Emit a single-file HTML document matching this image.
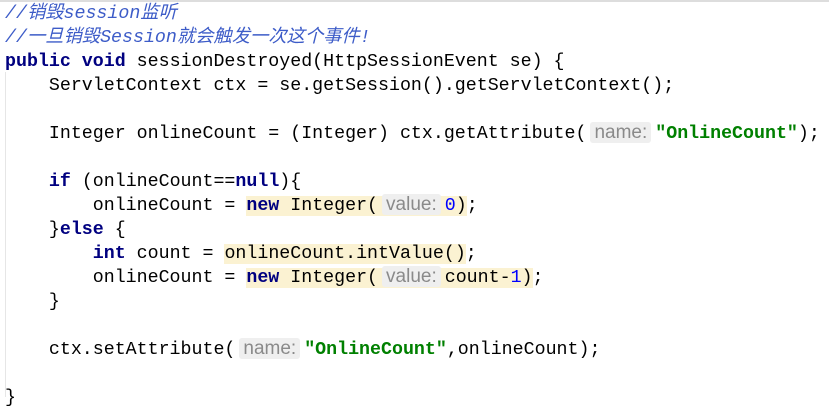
<html><head><style>
body{margin:0;width:829px;height:413px;background:#fff;overflow:hidden;position:relative}
.top{position:absolute;left:0;top:0;width:829px;height:2px;background:#ddd}
.guide{position:absolute;left:5px;top:72px;width:1px;height:325px;background:#e6e6e6}
pre{margin:0;position:absolute;left:5px;top:2px;font:18.3px/24px "Liberation Mono","Noto Sans CJK SC",monospace;color:#000;letter-spacing:0}
.k{color:#000080;font-weight:bold}
.c{color:#3d5cc8;font-style:italic}
.s{color:#008000;font-weight:bold}
.n{color:#0000ff}
.h{display:inline-block;background:#efefef;color:#8a8a8a;font:19px/21px "Liberation Sans",sans-serif;border-radius:3px;padding:0 4px;margin:0 4px;vertical-align:0}
.y{background:#fbf2d2}
</style></head><body>
<div class="top"></div><div class="guide"></div>
<pre><span class="c">//销毁session监听</span>
<span class="c">//一旦销毁Session就会触发一次这个事件!</span>
<span class="k">public void</span> sessionDestroyed(HttpSessionEvent se) {
    ServletContext ctx = se.getSession().getServletContext();

    Integer onlineCount = (Integer) ctx.getAttribute(<span class="h">name:</span><span class="s">"OnlineCount"</span>);

    <span class="k">if</span> (onlineCount==<span class="k">null</span>){
        onlineCount = <span class="y"><span class="k">new</span> Integer(<span class="h">value:</span><span class="n">0</span>)</span>;
    }<span class="k">else</span> {
        <span class="k">int</span> count = <span class="y">onlineCount.intValue()</span>;
        onlineCount = <span class="y"><span class="k">new</span> Integer(<span class="h">value:</span>count-<span class="n">1</span>)</span>;
    }

    ctx.setAttribute(<span class="h">name:</span><span class="s">"OnlineCount"</span>,onlineCount);

}</pre>
</body></html>
